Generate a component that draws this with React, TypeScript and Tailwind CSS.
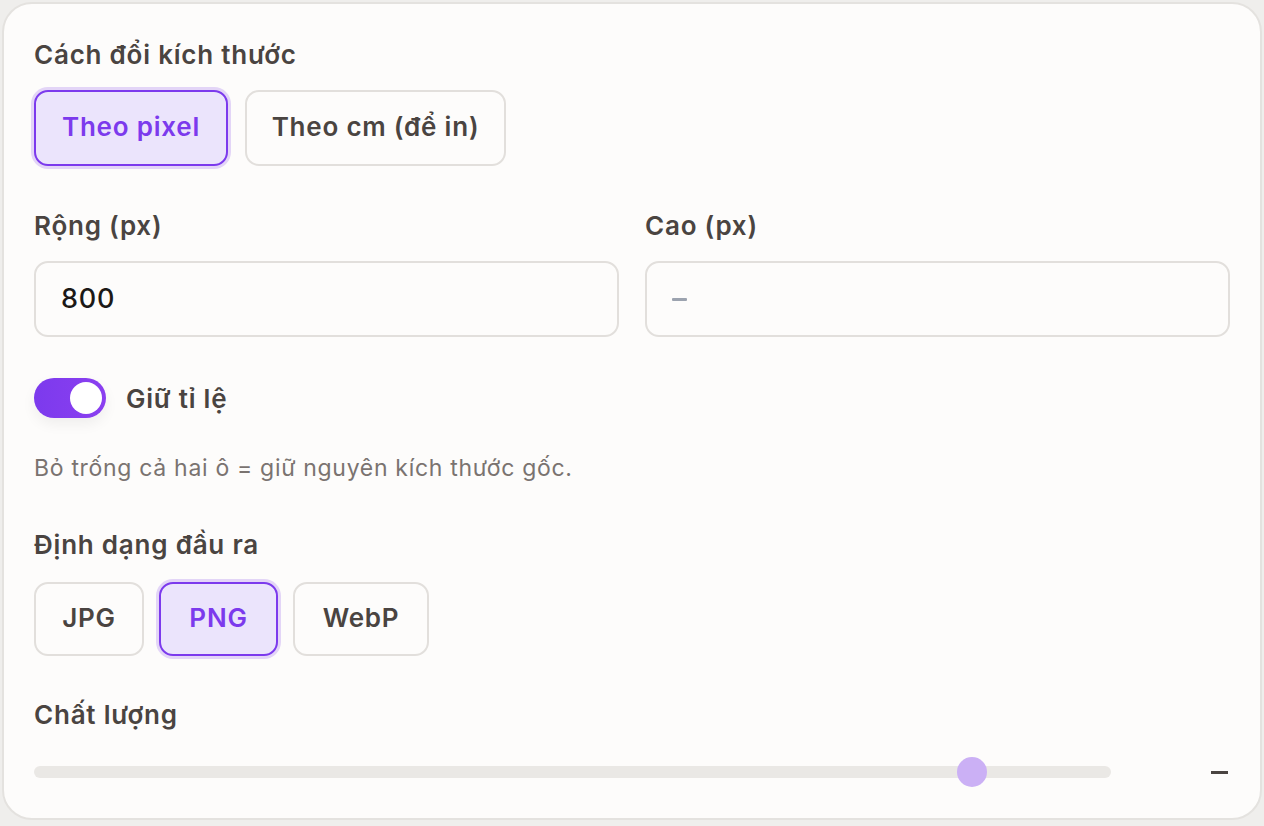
import { useState } from 'react';

const font = { fontFamily: 'Inter, "Noto Sans", sans-serif' };

function Label({ children }: { children: React.ReactNode }) {
  return <div className="text-[26px] leading-8 font-semibold text-[#4a4441] tracking-[0.03em]">{children}</div>;
}

function Choice({ label, active, onClick, className }: { label: string; active?: boolean; onClick?: () => void; className?: string }) {
  return (
    <button
      onClick={onClick}
      className={`rounded-[14px] border-2 pb-[3px] text-[26px] font-semibold tracking-[0.03em] ${
        active
          ? 'border-[#7c3aed] bg-[#ebe4fc] text-[#7c3aed] shadow-[0_0_0_3px_rgba(124,58,237,0.2)]'
          : 'border-[#e2dfdc] bg-[#fdfcfb] text-[#4a4441]'
      } ${className ?? ''}`}
    >
      {label}
    </button>
  );
}

export default function App() {
  const [mode, setMode] = useState('px');
  const [format, setFormat] = useState('PNG');

  return (
    <div className="min-h-screen bg-[#efeeec] p-[2px]" style={font}>
      <div className="rounded-[30px] border-2 border-[#e4e2df] bg-[#fdfcfb] px-[30px] pt-[35px] pb-[30px]">
        <Label>Cách đổi kích thước</Label>
        <div className="mt-[19px] flex gap-[17px]">
          <Choice label="Theo pixel" active={mode === 'px'} onClick={() => setMode('px')} className="h-[76px] w-[194px]" />
          <Choice label="Theo cm (để in)" active={mode === 'cm'} onClick={() => setMode('cm')} className="h-[76px] w-[261px]" />
        </div>

        <div className="mt-[44px] grid grid-cols-2 gap-[26px]">
          <div>
            <Label>Rộng (px)</Label>
            <div className="mt-[19px] flex h-[76px] items-center rounded-[14px] border-2 border-[#e2dfdc] bg-[#fdfcfb] px-[25px] text-[27px] font-medium tracking-[0.03em] text-[#1c1917]">
              800
            </div>
          </div>
          <div>
            <Label>Cao (px)</Label>
            <div className="mt-[19px] flex h-[76px] items-center rounded-[14px] border-2 border-[#e2dfdc] bg-[#fdfcfb] px-[25px]">
              <div className="h-[3px] w-[15px] rounded-[1px] bg-[#9ca3af]" />
            </div>
          </div>
        </div>

        <div className="mt-[41px] flex items-center gap-[20px]">
          <div className="flex h-[40px] w-[72px] items-center justify-end rounded-full bg-gradient-to-r from-[#7c3aed] to-[#8b3ff0] px-[4px] shadow-[0_6px_14px_rgba(0,0,0,0.06)]">
            <div className="h-[32px] w-[32px] rounded-full bg-white" />
          </div>
          <span className="text-[26px] font-semibold text-[#4a4441] tracking-[0.03em]">Giữ tỉ lệ</span>
        </div>

        <div className="mt-[35px] text-[23px] leading-[30px] tracking-[0.03em] text-[#7a7370]">
          Bỏ trống cả hai ô = giữ nguyên kích thước gốc.
        </div>

        <div className="mt-[46px]">
          <Label>Định dạng đầu ra</Label>
        </div>
        <div className="mt-[21px] flex gap-[15px]">
          <Choice label="JPG" active={format === 'JPG'} onClick={() => setFormat('JPG')} className="h-[74px] w-[110px]" />
          <Choice label="PNG" active={format === 'PNG'} onClick={() => setFormat('PNG')} className="h-[74px] w-[119px]" />
          <Choice label="WebP" active={format === 'WebP'} onClick={() => setFormat('WebP')} className="h-[74px] w-[136px]" />
        </div>

        <div className="mt-[43px]">
          <Label>Chất lượng</Label>
        </div>
        <div className="mt-[25px] flex h-[32px] items-center">
          <div className="relative h-[12px] flex-1 rounded-full bg-[#eae8e5]">
            <div className="absolute top-1/2 h-[30px] w-[30px] -translate-x-1/2 -translate-y-1/2 rounded-full bg-[#cbb0f5]" style={{ left: '87.1%' }} />
          </div>
          <div className="flex w-[119px] justify-end pr-[2px]">
            <div className="h-[3px] w-[17px] bg-[#4a4441]" />
          </div>
        </div>
      </div>
    </div>
  );
}
